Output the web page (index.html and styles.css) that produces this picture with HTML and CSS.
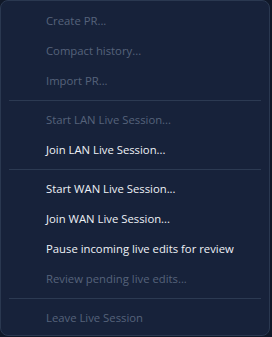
FILE: index.html
```html
<!DOCTYPE html>
<html lang="en">
<head>
  <meta charset="UTF-8">
  <meta name="viewport" content="width=device-width, initial-scale=1.0">
  <title>Live Session Menu</title>
  <link rel="stylesheet" href="styles.css">
</head>
<body>
  <div class="menu">
    <div class="menu__item disabled">Create PR...</div>
    <div class="menu__item disabled">Compact history...</div>
    <div class="menu__item disabled">Import PR...</div>
    <div class="menu__sep"></div>
    <div class="menu__item disabled">Start LAN Live Session...</div>
    <div class="menu__item">Join LAN Live Session...</div>
    <div class="menu__sep"></div>
    <div class="menu__item">Start WAN Live Session...</div>
    <div class="menu__item">Join WAN Live Session...</div>
    <div class="menu__item">Pause incoming live edits for review</div>
    <div class="menu__item disabled">Review pending live edits...</div>
    <div class="menu__sep"></div>
    <div class="menu__item disabled">Leave Live Session</div>
  </div>
</body>
</html>
```

FILE: styles.css
```css
* {
  box-sizing: border-box;
  margin: 0;
  padding: 0;
}

body {
  background-color: #101828;
  font-family: "Open Sans", "Noto Sans", sans-serif;
  font-size: 11.3px;
}

.menu {
  width: 270px;
  height: 336px;
  background-color: #17223a;
  border: 1px solid #2a3850;
  border-radius: 8px;
  padding: 5px 0 0;
  display: flex;
  flex-direction: column;
}

.menu__item {
  height: 30px;
  line-height: 30px;
  padding-left: 45px;
  color: #eef1f6;
  white-space: nowrap;
}

.menu__item.disabled {
  color: #56627a;
}

.menu__sep {
  height: 9px;
  margin: 0 8px;
  display: flex;
  align-items: center;
}

.menu__sep::after {
  content: "";
  flex: 1;
  height: 1px;
  background-color: #2c3a52;
}
```
